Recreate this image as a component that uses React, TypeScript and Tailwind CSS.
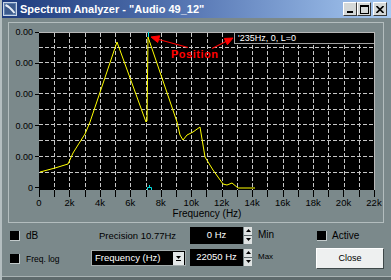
import React from "react";

const yLabels = ["0.00", "0.00", "0.00", "0.00", "0.00", "0"];
const xLabels = ["0", "2k", "4k", "6k", "8k", "10k", "12k", "14k", "16k", "18k", "20k", "22k"];
const ticks = Array.from({ length: 23 }, (_, i) => i);
const hLines = [15, 30, 46, 61, 77, 92, 108, 124, 140];
const vLines = Array.from({ length: 21 }, (_, i) => Math.round(((i + 1) * 335) / 22));

const curve =
  "1,140 16,136 29,132 34,121 39,113 46,102 51,90 78,10 107,90 108,89 109,5 138,90 141,103 144,108 148,103 154,100 161,95 166,125 174,138 184,152 188,153 193,151 199,156 216,156";

function Check() {
  return <div className="w-[10px] h-[10px] bg-black border-b border-r border-[#c3cbcc] shrink-0" />;
}

function Spin({ value }: { value: string }) {
  return (
    <div className="flex h-[17px]">
      <div className="w-[53px] h-full bg-black text-white text-[9.5px] flex items-center justify-center leading-none">
        {value}
      </div>
      <div className="w-[9px] h-full flex flex-col bg-[#dfe3e3] border-l border-[#7b898b]">
        <div className="flex-1 flex items-center justify-center border-b border-[#5b6567]">
          <svg width="5" height="3">
            <polygon points="2.5,0 5,3 0,3" fill="#000" />
          </svg>
        </div>
        <div className="flex-1 flex items-center justify-center">
          <svg width="5" height="3">
            <polygon points="0,0 5,0 2.5,3" fill="#000" />
          </svg>
        </div>
      </div>
    </div>
  );
}

export default function App() {
  return (
    <div className="w-[391px] h-[280px] bg-[#7b898b] flex flex-col overflow-hidden border-l-2 border-[#b4bec0] text-black font-['Liberation_Sans',Arial,sans-serif]">
      {/* Title bar */}
      <div className="h-[18px] shrink-0 flex items-center bg-linear-to-r from-[#1d3a7c] via-[#5a7ab6] to-[#a8caf2]">
        <svg className="ml-px shrink-0" width="14" height="14" viewBox="0 0 14 14">
          <rect x="0.5" y="0.5" width="13" height="13" fill="#5f7fae" stroke="#c9d6e6" />
          <rect x="2" y="2" width="10" height="10" fill="#3d5b8c" />
          <path d="M2.5 3 Q7 5 11.5 11" stroke="#e8eef6" strokeWidth="2" fill="none" />
        </svg>
        <span className="ml-[3px] text-white font-bold text-[11px] leading-none whitespace-nowrap">
          Spectrum Analyzer - "Audio 49_12"
        </span>
        <div className="ml-auto mr-[4px] flex items-center">
          <div className="w-[14px] h-[14px] bg-[#d4d8d8] border-t border-l border-white border-r border-b border-r-[#3a3a3a] border-b-[#3a3a3a] flex items-end justify-start">
            <div className="ml-[3px] mb-[2px] w-[6px] h-[2px] bg-black" />
          </div>
          <div className="w-[14px] h-[14px] bg-[#d4d8d8] border-t border-l border-white border-r border-b border-r-[#3a3a3a] border-b-[#3a3a3a] flex items-center justify-center">
            <div className="w-[9px] h-[9px] border border-black border-t-2" />
          </div>
          <div className="ml-[2px] w-[14px] h-[14px] bg-[#d4d8d8] border-t border-l border-white border-r border-b border-r-[#3a3a3a] border-b-[#3a3a3a] flex items-center justify-center">
            <svg width="8" height="7" viewBox="0 0 8 7">
              <path d="M0.5 0 L7.5 7 M7.5 0 L0.5 7" stroke="#000" strokeWidth="1.6" />
            </svg>
          </div>
        </div>
      </div>

      {/* Body */}
      <div className="pl-[6px] pt-[4px]">
        <div className="w-[376px] h-[201px] border border-[#b3bdbe]">
          <div className="flex flex-col pt-[9px]">
            <div className="flex">
              <div className="w-[30px] h-[156px] flex flex-col justify-between">
                {yLabels.map((l, i) => (
                  <div key={i} className="h-0 flex items-center justify-end">
                    <span className="text-[9px] leading-[10px]">{l}</span>
                    <span className="ml-[2px] w-[4px] h-px bg-black" />
                  </div>
                ))}
              </div>
              <div className="relative w-[336px] h-[158px] bg-black border-t border-r border-[#b8b8b8]">
                <svg
                  className="absolute left-0 -top-px overflow-visible"
                  width="336"
                  height="159"
                  viewBox="0 0 336 159"
                >
                  {hLines.map((y) => (
                    <line key={"h" + y} x1="0" x2="335" y1={y + 0.5} y2={y + 0.5} stroke="#c6c6c6" strokeDasharray="4 2" />
                  ))}
                  {vLines.map((x) => (
                    <line key={"v" + x} x1={x + 0.5} x2={x + 0.5} y1="1" y2="158" stroke="#c6c6c6" strokeDasharray="4 2" />
                  ))}
                  <polyline points={curve} fill="none" stroke="#ffff00" strokeWidth="1" />
                  <line x1="109.5" x2="109.5" y1="0" y2="5" stroke="#00e0e0" />
                  <path d="M108.5 158 V155.5 H112.5 V158 M110.5 155.5 V153" stroke="#00e0e0" fill="none" />
                  <g stroke="#ff0000" fill="#ff0000">
                    <line x1="149" y1="15.5" x2="118" y2="7" strokeWidth="1.2" />
                    <polygon points="112,5 118.7,10.5 120.7,3.8" />
                    <line x1="173" y1="16.5" x2="188" y2="9" strokeWidth="1.2" />
                    <polygon points="194,6 185.3,6.45 188.4,12.7" />
                  </g>
                </svg>
                <div className="absolute left-[195px] top-0 right-0 h-[11px] bg-black border-l border-b border-[#a0a0a0] pl-[3px] text-white text-[9px] leading-[10px] whitespace-nowrap overflow-hidden">
                  '235Hz, 0, L=0
                </div>
                <div className="absolute left-[132px] top-[15px] text-[#ff0000] font-bold text-[11px] leading-[12px] tracking-[0.5px]">
                  Position
                </div>
              </div>
            </div>
            <div className="ml-[30px] w-[336px] h-[7px] flex justify-between">
              {ticks.map((i) => (
                <div key={i} className="w-px h-[7px] bg-black" />
              ))}
            </div>
            <div className="ml-[20px] w-[355px] h-[12px] flex justify-between">
              {xLabels.map((l) => (
                <div key={l} className="w-[20px] text-center text-[9.5px] leading-[12px] whitespace-nowrap">
                  {l}
                </div>
              ))}
            </div>
            <div className="ml-[30px] w-[336px] text-center text-[10px] leading-[10px]">Frequency (Hz)</div>
          </div>
        </div>

        {/* Controls */}
        <div className="flex mt-[2px] pl-[2px] h-[44px]">
          <div className="w-[81px] flex flex-col">
            <div className="h-[22px] flex items-center">
              <Check />
              <span className="ml-[6px] text-[10px] leading-none">dB</span>
            </div>
            <div className="h-[22px] flex items-center pt-[2px]">
              <Check />
              <span className="ml-[6px] text-[8.5px] leading-none">Freq. log</span>
            </div>
          </div>
          <div className="w-[99px] flex flex-col">
            <div className="h-[22px] flex items-center pl-[8px] text-[9.5px] leading-none whitespace-nowrap">
              Precision 10.77Hz
            </div>
            <div className="h-[22px] flex items-center">
              <div className="w-[95px] h-[16px] bg-black border border-[#a3acad] flex items-center">
                <span className="ml-[3px] text-white text-[9.5px] leading-none whitespace-nowrap">Frequency (Hz)</span>
                <div className="ml-auto mr-px w-[11px] h-[13px] bg-[#e4e8e8] flex flex-col items-center justify-center gap-[1px]">
                  <svg width="5" height="3">
                    <polygon points="0,0 5,0 2.5,3" fill="#000" />
                  </svg>
                  <div className="w-[5px] h-px bg-black" />
                </div>
              </div>
            </div>
          </div>
          <div className="w-[126px] flex flex-col">
            <div className="h-[22px] flex items-center -mt-px">
              <Spin value="0 Hz" />
              <span className="ml-[6px] text-[10px] leading-none">Min</span>
            </div>
            <div className="h-[22px] flex items-center">
              <Spin value="22050 Hz" />
              <span className="ml-[6px] text-[8px] leading-none">Max</span>
            </div>
          </div>
          <div className="flex flex-col">
            <div className="h-[22px] flex items-center pl-px">
              <Check />
              <span className="ml-[5px] text-[10px] leading-none">Active</span>
            </div>
            <div className="h-[22px] flex items-center">
              <div className="w-[68px] h-[21px] bg-[#eef0f0] border-t border-l border-white border-r border-b border-r-[#3e4849] border-b-[#3e4849] flex items-center justify-center text-[9px] leading-none">
                Close
              </div>
            </div>
          </div>
        </div>
      </div>
      <div className="mt-auto h-[4px] border-t border-[#a9b3b4] bg-[#5e6a6c]" />
    </div>
  );
}
